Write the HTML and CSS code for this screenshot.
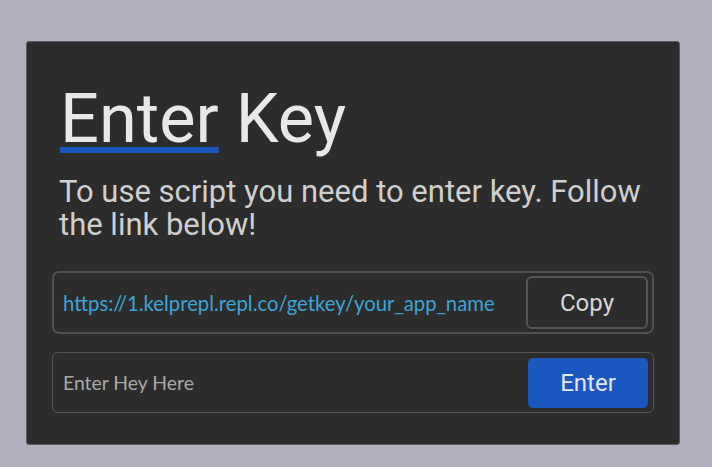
FILE: index.html
```html
<!DOCTYPE html>
<html>
<head>
<meta charset="utf-8">
<link rel="stylesheet" href="styles.css">
</head>
<body>
<div class="card">
  <h1 class="title"><span class="accent">Enter</span> Key</h1>
  <p class="desc">To use script you need to enter key. Follow the link below!</p>
  <div class="row link-row">
    <span class="link">https://1.kelprepl.repl.co/getkey/your_app_name</span>
    <button class="btn copy">Copy</button>
  </div>
  <div class="row key-row">
    <input class="key-input" type="text" placeholder="Enter Hey Here">
    <button class="btn enter">Enter</button>
  </div>
</div>
</body>
</html>
```

FILE: styles.css
```css
html, body {
  margin: 0;
  padding: 0;
}
body {
  background: #b1aebe;
  width: 712px;
  height: 467px;
  overflow: hidden;
  padding-top: 41px;
  box-sizing: border-box;
}
.card {
  margin-left: 26px;
  width: 654px;
  height: 404px;
  box-sizing: border-box;
  background: #2c2c2c;
  border: 1px solid #5a5a5e;
  border-radius: 3px;
  padding: 43px 25px 0 25px;
  font-family: Roboto, "Liberation Sans", sans-serif;
}
.title {
  margin: 0 0 0 8px;
  font-size: 68.5px;
  line-height: 68px;
  font-weight: 400;
  color: #e8e8e8;
}
.accent {
  text-decoration: underline;
  text-decoration-color: #1a56be;
  text-decoration-thickness: 6px;
  text-underline-offset: 5px;
}
.desc {
  margin: 22px 0 0 7px;
  font-size: 31px;
  line-height: 33px;
  color: #cfcfcf;
}
.row {
  display: flex;
  align-items: center;
  justify-content: space-between;
  box-sizing: border-box;
}
.link-row {
  margin-top: 30px;
  height: 63px;
  border: 2px solid #505050;
  border-radius: 7px;
  padding: 0 4px 0 9px;
}
.link {
  font-family: Lato, sans-serif;
  font-size: 20.3px;
  color: #3aa6d8;
}
.btn {
  font-family: Roboto, "Liberation Sans", sans-serif;
  font-size: 24px;
  border-radius: 6px;
  padding: 0;
}
.copy {
  width: 122px;
  height: 53px;
  background: #2c2c2c;
  border: 2px solid #555;
  color: #d6d6d6;
}
.key-row {
  margin-top: 18px;
  height: 61px;
  border: 1px solid #555;
  border-radius: 6px;
  padding: 0 5px 0 10px;
}
.key-input {
  background: transparent;
  border: none;
  outline: none;
  font-family: Lato, sans-serif;
  font-size: 19.4px;
  color: #ddd;
  padding: 0;
  width: 300px;
}
.key-input::placeholder {
  color: #a8a8a8;
}
.enter {
  width: 120px;
  height: 50px;
  background: #1a57bf;
  border: none;
  border-radius: 5px;
  color: #e6e6e6;
}
```
